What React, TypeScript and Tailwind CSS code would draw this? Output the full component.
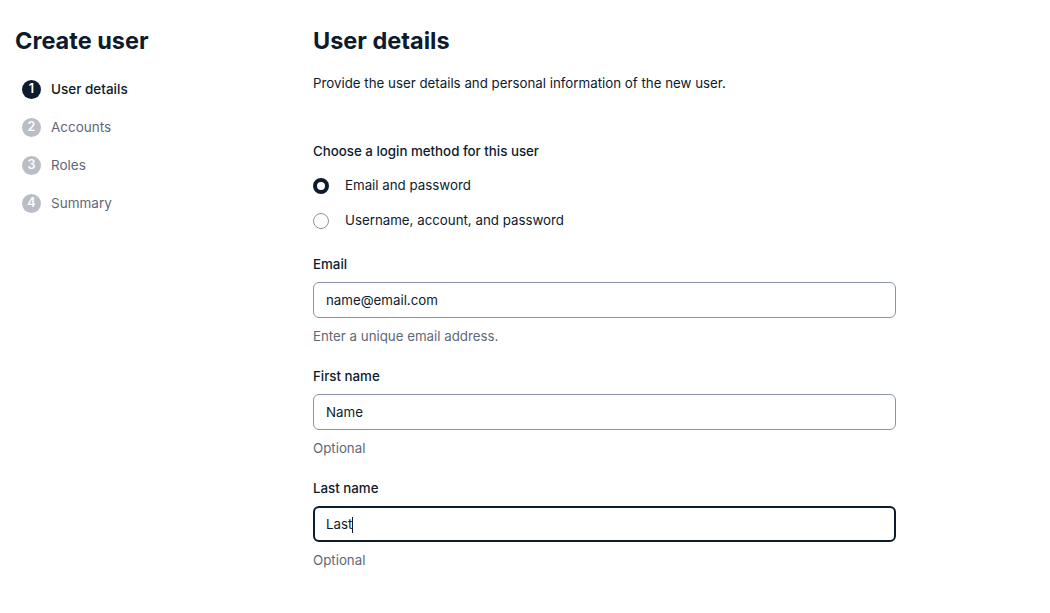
import React, { useState } from 'react';

const steps = ['User details', 'Accounts', 'Roles', 'Summary'];

const Field: React.FC<{ label: string; value: string; hint: string; focused?: boolean }> = ({ label, value, hint, focused }) => (
  <div className="flex flex-col">
    <label className="text-[13.3px] font-medium text-[#0d1b2e] leading-[16px] h-[16px]">{label}</label>
    <div
      className={`mt-[10px] h-[36px] w-[583px] rounded-[6px] flex items-center pt-px text-[13.3px] text-[#0d1b2e] ${
        focused ? 'border-2 border-[#0d1b2e] px-[11px]' : 'border border-[#8c94a3] px-[12px]'
      }`}
    >
      {value}
      {focused && <span className="w-px h-[16px] bg-[#0d1b2e]" />}
    </div>
    <p className="mt-[10px] text-[13.3px] text-[#5f6778] leading-[16px]">{hint}</p>
  </div>
);

const App: React.FC = () => {
  const [method, setMethod] = useState<'email' | 'username'>('email');

  return (
    <div className="min-h-screen w-[1050px] bg-white font-['Inter',sans-serif] flex">
      {/* Sidebar */}
      <aside className="w-[313px] shrink-0 pl-[15px] pt-[27px]">
        <h1 className="text-[23.5px] font-bold text-[#0d1b2e] leading-[28px]">Create user</h1>
        <ol className="mt-[24px] flex flex-col gap-[18px] pl-[7px]">
          {steps.map((s, i) => (
            <li key={s} className="flex items-center h-[20px]">
              <span
                className={`w-[19px] h-[19px] rounded-full flex items-center justify-center text-[12.5px] font-semibold text-white ${
                  i === 0 ? 'bg-[#0d1b2e]' : 'bg-[#b9bdc6]'
                }`}
              >
                {i + 1}
              </span>
              <span className={`ml-[10px] text-[13.5px] ${i === 0 ? 'text-[#0d1b2e] font-medium' : 'text-[#5f6778]'}`}>{s}</span>
            </li>
          ))}
        </ol>
      </aside>

      {/* Main */}
      <main className="pt-[27px]">
        <h2 className="text-[23.5px] font-bold text-[#0d1b2e] leading-[28px]">User details</h2>
        <p className="mt-[20px] text-[13.3px] text-[#0d1b2e] leading-[16px]">
          Provide the user details and personal information of the new user.
        </p>

        <p className="mt-[52px] text-[13.3px] font-medium text-[#0d1b2e] leading-[16px]">Choose a login method for this user</p>
        <div className="mt-[18px] flex flex-col gap-[17px]">
          <button className="flex items-center h-[18px]" onClick={() => setMethod('email')}>
            <span
              className={`w-[16px] h-[16px] rounded-full ${
                method === 'email' ? 'border-[4px] border-[#0d1b2e]' : 'border border-[#8c94a3]'
              }`}
            />
            <span className="ml-[16px] text-[13.3px] text-[#0d1b2e]">Email and password</span>
          </button>
          <button className="flex items-center h-[18px]" onClick={() => setMethod('username')}>
            <span
              className={`w-[16px] h-[16px] rounded-full ${
                method === 'username' ? 'border-[4px] border-[#0d1b2e]' : 'border border-[#8c94a3]'
              }`}
            />
            <span className="ml-[16px] text-[13.3px] text-[#0d1b2e]">Username, account, and password</span>
          </button>
        </div>

        <div className="mt-[26px] flex flex-col gap-[24px]">
          <Field label="Email" value="name@email.com" hint="Enter a unique email address." />
          <Field label="First name" value="Name" hint="Optional" />
          <Field label="Last name" value="Last" hint="Optional" focused />
        </div>
      </main>
    </div>
  );
};

export default App;
